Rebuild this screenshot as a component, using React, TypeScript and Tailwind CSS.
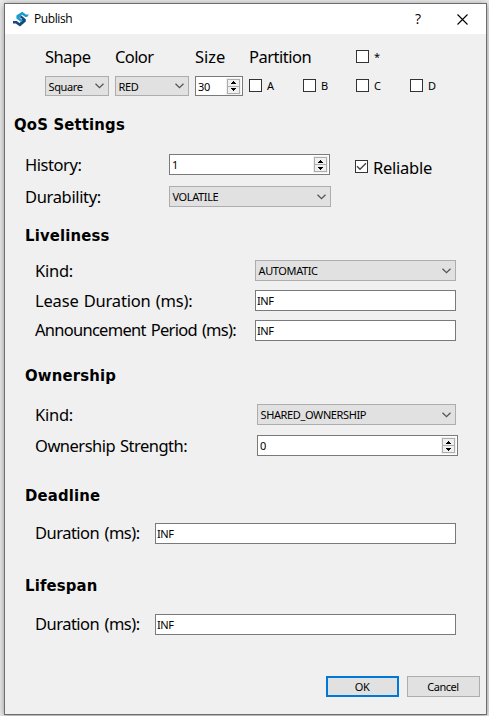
import type { ReactNode } from "react";

const label =
  "block h-5 shrink-0 whitespace-nowrap font-['Noto_Sans',sans-serif] text-[16.5px] leading-5 text-black";
const small =
  "whitespace-nowrap font-['Noto_Sans',sans-serif] text-[11px] leading-[19px] text-black";
const heading =
  "block h-5 whitespace-nowrap font-['DejaVu_Sans_Condensed','DejaVu_Sans',sans-serif] text-[16.5px] font-bold leading-5 tracking-[0.18px] text-black";

function Combo({ className, text }: { className: string; text: string }) {
  return (
    <div className={`flex shrink-0 items-center justify-between border border-[#adadad] bg-[#e1e1e1] pl-[2.5px] pr-1 ${className}`}>
      <span className={`${small} tracking-[-0.38px]`}>{text}</span>
      <svg width="9" height="6" viewBox="0 0 9 6" fill="none" stroke="#555" strokeWidth="1.3">
        <path d="M0.5 0.7 4.5 4.7 8.5 0.7" />
      </svg>
    </div>
  );
}

function Field({ className, text }: { className: string; text: string }) {
  return (
    <div className={`flex shrink-0 items-center border border-[#7a7a7a] bg-white pl-px ${className}`}>
      <span className={`${small} tracking-[-0.4px]`}>{text}</span>
    </div>
  );
}

function Spin({ className, text }: { className: string; text: string }) {
  return (
    <div className={`flex shrink-0 items-center justify-between border border-[#7a7a7a] bg-white pl-[2px] pr-px ${className}`}>
      <span className={`${small} tracking-[-0.4px]`}>{text}</span>
      <div className="flex h-[17px] w-[15px] flex-col bg-[#f0f0f0] p-px">
        <div className="flex flex-1 items-center justify-center border border-[#adadad]">
          <svg width="5" height="3" viewBox="0 0 5 3"><path d="M2 0h1v1h1v1h1v1H0V2h1V1h1z" /></svg>
        </div>
        <div className="-mt-px flex flex-1 items-center justify-center border border-[#adadad]">
          <svg width="5" height="3" viewBox="0 0 5 3"><path d="M0 0h5v1H4v1H3v1H2V2H1V1H0z" /></svg>
        </div>
      </div>
    </div>
  );
}

function Box({ checked = false, className = "" }: { checked?: boolean; className?: string }) {
  return (
    <span className={`flex size-[13px] shrink-0 items-center justify-center border border-[#333] bg-white ${className}`}>
      {checked && (
        <svg width="11" height="11" viewBox="0 0 11 11" fill="none" stroke="#444" strokeWidth="1.4">
          <path d="M1 5.2 4 8.2 10 2.2" />
        </svg>
      )}
    </span>
  );
}

function Check({ text, className }: { text: string; className: string }) {
  return (
    <div className={`flex h-[13px] shrink-0 items-center gap-[5px] ${className}`}>
      <Box />
      <span className={small}>{text}</span>
    </div>
  );
}

function Row({ className, children }: { className: string; children: ReactNode }) {
  return <div className={`flex h-[21px] shrink-0 items-start ${className}`}>{children}</div>;
}

export default function App() {
  return (
    <div className="h-[716px] w-[489px] overflow-hidden bg-[#ececec] pl-1 pt-[3px]">
      <div className="flex h-[712px] w-[483px] flex-col border border-[#6d6d6d] bg-[#f0f0f0] shadow-[0_1px_7px_rgba(0,0,0,0.4)]">
        <div className="flex h-[30px] shrink-0 items-center bg-white pl-2">
          <svg width="16" height="16" viewBox="0 0 16 16">
            <path d="M0 10h3.6l2.9 2 2.3-1.9V7.6L6.5 6.2 8.3 4.6l4.5 3.6v2.4L7 15.4 2.8 12.4H0z" fill="#15497c" />
            <path d="M16 3.6h-3L9.2 0.8 3.4 4.6v3l4.8 3.4 1.8-1.4L6.4 6.4 9 3.8l3.4 2.3H14z" fill="#1b9bd2" />
          </svg>
          <span className="ml-[5px] w-[60px] font-['Open_Sans','Noto_Sans',sans-serif] text-[12px] leading-4 tracking-[-0.4px] text-black">Publish</span>
          <span className="ml-[321px] w-3 font-['Open_Sans','Noto_Sans',sans-serif] text-[14px] leading-4 text-black">?</span>
          <svg className="ml-[30px]" width="11" height="11" viewBox="0 0 11 11" stroke="#000" strokeWidth="1.1">
            <path d="M0.5 0.5l10 10M10.5 0.5l-10 10" />
          </svg>
        </div>

        <Row className="mt-[13px] pl-10">
          <span className={`${label} w-[70px] tracking-[-0.5px]`}>Shape</span>
          <span className={`${label} w-20 tracking-[-0.6px]`}>Color</span>
          <span className={`${label} w-[54px]`}>Size</span>
          <span className={`${label} w-[107px] tracking-[-0.5px]`}>Partition</span>
          <Check text="*" className="mt-[3px]" />
        </Row>
        <Row className="mt-2 pl-10">
          <Combo className="h-5 w-16" text="Square" />
          <Combo className="ml-1.5 h-5 w-[74px]" text="RED" />
          <Spin className="ml-1.5 h-5 w-12" text="30" />
          <Check text="A" className="ml-1.5 mt-[3px] w-[54px]" />
          <Check text="B" className="mt-[3px] w-[53px]" />
          <Check text="C" className="mt-[3px] w-[54px]" />
          <Check text="D" className="mt-[3px]" />
        </Row>

        <h1 className={`${heading} ml-[9px] mt-[18px]`}>QoS Settings</h1>
        <Row className="mt-[19px] pl-5">
          <span className={`${label} mt-px w-36 tracking-[-0.45px]`}>History:</span>
          <Spin className="h-[21px] w-[161px]" text="1" />
          <Box checked className="ml-[25px] mt-1.5" />
          <span className={`${label} ml-[5px] mt-1 tracking-[-0.25px]`}>Reliable</span>
        </Row>
        <Row className="mt-[11px] pl-5">
          <span className={`${label} mt-px w-36 tracking-[-0.35px]`}>Durability:</span>
          <Combo className="h-[21px] w-[162px]" text="VOLATILE" />
        </Row>

        <h2 className={`${heading} ml-5 mt-[19px]`}>Liveliness</h2>
        <Row className="mt-[14px] pl-[30px]">
          <span className={`${label} mt-px w-[220px] tracking-[-0.25px]`}>Kind:</span>
          <Combo className="h-[21px] w-[201px]" text="AUTOMATIC" />
        </Row>
        <Row className="mt-[9px] pl-[30px]">
          <span className={`${label} mt-px w-[220px] tracking-[-0.18px] [word-spacing:1px]`}>Lease Duration (ms):</span>
          <Field className="h-[21px] w-[201px]" text="INF" />
        </Row>
        <Row className="mt-[9px] pl-[30px]">
          <span className={`${label} w-[220px] tracking-[-0.73px] [word-spacing:1.5px]`}>Announcement Period (ms):</span>
          <Field className="h-[21px] w-[201px]" text="INF" />
        </Row>

        <h2 className={`${heading} ml-5 mt-[25px]`}>Ownership</h2>
        <Row className="mt-[18px] pl-[30px]">
          <span className={`${label} mt-px w-[222px] tracking-[-0.25px]`}>Kind:</span>
          <Combo className="h-[21px] w-[199px]" text="SHARED_OWNERSHIP" />
        </Row>
        <Row className="mt-2.5 pl-[30px]">
          <span className={`${label} mt-px w-[222px] tracking-[-0.5px] [word-spacing:1px]`}>Ownership Strength:</span>
          <Spin className="h-[21px] w-[201px]" text="0" />
        </Row>

        <h2 className={`${heading} ml-5 mt-[30px]`}>Deadline</h2>
        <Row className="mt-[17px] pl-[30px]">
          <span className={`${label} w-[120px] tracking-[-0.52px] [word-spacing:1.5px]`}>Duration (ms):</span>
          <Field className="h-[21px] w-[301px]" text="INF" />
        </Row>

        <h2 className={`${heading} ml-5 mt-8`}>Lifespan</h2>
        <Row className="mt-[18px] pl-[30px]">
          <span className={`${label} w-[120px] tracking-[-0.52px] [word-spacing:1.5px]`}>Duration (ms):</span>
          <Field className="h-[21px] w-[301px]" text="INF" />
        </Row>

        <Row className="mt-[41px] justify-end gap-2 pr-1.5">
          <button className={`${small} flex h-[21px] w-[73px] items-center justify-center border-2 border-[#0078d7] bg-[#e1e1e1] pr-px tracking-[-0.4px]`}>OK</button>
          <button className={`${small} flex h-[21px] w-[73px] items-center justify-center border border-[#adadad] bg-[#e1e1e1] pr-px tracking-[-0.45px]`}>Cancel</button>
        </Row>
      </div>
    </div>
  );
}
